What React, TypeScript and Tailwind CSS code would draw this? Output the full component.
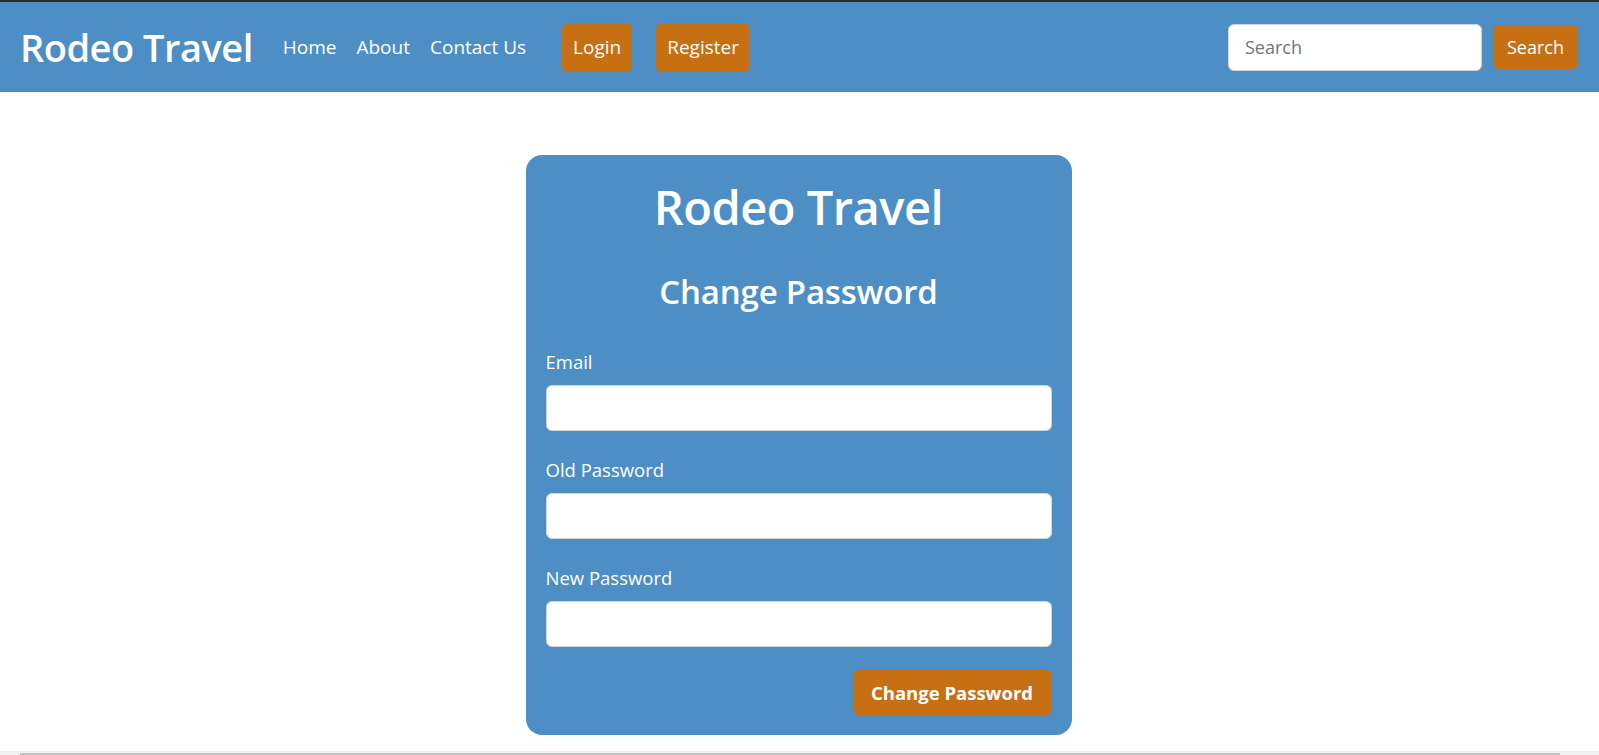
import React from "react";

const links = ["Home", "About", "Contact Us"];
const fields = ["Email", "Old Password", "New Password"];

const Navbar = () => {
  return (
    <nav className="h-[92px] border-t-2 border-[#2b2b2b] bg-[#4d8ec4] flex items-center pl-5 pr-[21px]">
      <a className="text-[38px] font-semibold text-white leading-none tracking-[-0.5px]">
        Rodeo Travel
      </a>
      <ul className="flex items-center gap-5 ml-[30px]">
        {links.map((link) => (
          <li key={link} className="text-[19px] text-white">
            {link}
          </li>
        ))}
      </ul>
      <button className="ml-[36px] h-[49px] px-[11px] rounded-md bg-[#c76f13] text-white text-[19px]">
        Login
      </button>
      <button className="ml-[24px] h-[49px] px-[11px] rounded-md bg-[#c76f13] text-white text-[19px]">
        Register
      </button>
      <div className="ml-auto flex items-center gap-[11px]">
        <input
          placeholder="Search"
          className="w-[254px] h-[47px] rounded-md border border-[#ced4da] bg-white px-4 text-[18px] text-[#212529] placeholder:text-[#6c757d] outline-none"
        />
        <button className="h-[44px] px-[14px] rounded-md bg-[#c76f13] text-white text-[18px]">
          Search
        </button>
      </div>
    </nav>
  );
};

const ChangePasswordCard = () => {
  return (
    <div className="w-[546px] rounded-2xl bg-[#4d8ec4] px-5 pb-5 text-white">
      <h1 className="mt-[22px] text-center text-[47px] font-semibold leading-[60px] tracking-[-0.5px]">
        Rodeo Travel
      </h1>
      <h2 className="mt-[35px] text-center text-[33px] font-semibold leading-10 tracking-[-0.2px]">
        Change Password
      </h2>
      <form className="mt-[36px] flex flex-col">
        {fields.map((field, index) => (
          <div key={field} className={index > 0 ? "mt-[25px]" : ""}>
            <label className="block text-[18.5px] leading-[27px]">{field}</label>
            <input
              type={field === "Email" ? "email" : "password"}
              className="mt-[10px] block w-full h-[46px] rounded-md border border-[#ced4da] bg-white px-3 text-[#212529] outline-none"
            />
          </div>
        ))}
        <div className="mt-[23px] flex justify-end">
          <button className="h-[45px] w-[199px] rounded-md bg-[#c76f13] text-[18.5px] font-bold text-white">
            Change Password
          </button>
        </div>
      </form>
    </div>
  );
};

export default function App() {
  return (
    <div className="h-[755px] flex flex-col bg-white font-['Open_Sans',sans-serif] overflow-hidden">
      <Navbar />
      <main className="flex-1 flex items-start justify-center pt-[63px] pr-[2px]">
        <ChangePasswordCard />
      </main>
      <div className="h-[4px] bg-[#f1f1f1] px-5">
        <div className="h-[2px] mt-[2px] w-[1540px] bg-[#c1c1c1]"></div>
      </div>
    </div>
  );
}
